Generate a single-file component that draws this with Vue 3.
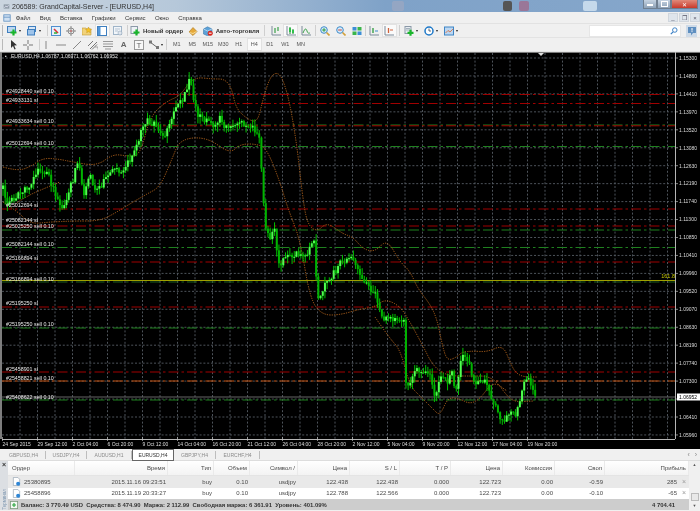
<template>
  <div class="app">
    <!-- заголовок окна -->
    <div class="titlebar">
      <svg class="ic app-ic" viewBox="0 0 10 10"><rect x="1" y="2" width="8" height="6" fill="#8d99a5" /><path d="M2 7 4 4l2 2 2-3" fill="none" stroke="#eef" /></svg>
      <span class="title">206589: GrandCapital-Server - [EURUSD,H4]</span>
      <span v-for="b in blobs" :key="b.cls" class="blob" :class="b.cls"></span>
      <div class="win-btns">
        <span class="wb"><i class="wb-min"></i></span>
        <span class="wb"><i class="wb-max"></i></span>
        <span class="wb wb-close">✕</span>
      </div>
    </div>

    <!-- меню -->
    <div class="menubar">
      <svg class="ic menu-ic" viewBox="0 0 10 10"><rect x="1" y="1" width="8" height="8" fill="#cfe0f2" stroke="#5f8fc0" /><path d="M1 4h8" stroke="#5f8fc0" /></svg>
      <span v-for="m in menu" :key="m" class="menu-item">{{ m }}</span>
      <div class="mdi-btns">
        <span class="mdi">_</span>
        <span class="mdi">❐</span>
        <span class="mdi">×</span>
      </div>
    </div>

    <!-- панель 1 -->
    <div class="toolbar">
      <span class="grip"></span>
      <div class="tb dd">
        <svg class="ic" viewBox="0 0 10 10"><rect x=".5" y=".5" width="8" height="6" fill="#bcd7f2" stroke="#3f7fbf" /><path d="M6.5 3.5v6M3.5 6.5h6" stroke="#19b52b" stroke-width="2.2" /></svg>
        <i class="caret"></i>
      </div>
      <div class="tb dd ml2">
        <svg class="ic" viewBox="0 0 10 10"><rect x="1.5" y=".5" width="7" height="5" fill="#d7e6f6" stroke="#3f7fbf" /><rect x=".5" y="3.5" width="7" height="5.5" fill="#9fc4ea" stroke="#3f7fbf" /></svg>
        <i class="caret"></i>
      </div>
      <span class="sep ml4"></span>
      <div class="tb w155">
        <svg class="ic" viewBox="0 0 10 10"><rect x=".5" y=".5" width="9" height="9" fill="#e6f0fa" stroke="#4f8fcf" /><path d="M3 3l4 4" stroke="#d33" stroke-width="1.6" /><path d="M3 7h3" stroke="#2a2" stroke-width="1.4" /></svg>
      </div>
      <div class="tb w155">
        <svg class="ic" viewBox="0 0 10 10" fill="none" stroke="#8b8b8b"><circle cx="5" cy="5" r="3" /><path d="M5 0v10M0 5h10" /><circle cx="5" cy="5" r=".8" fill="#d55" stroke="none" /></svg>
      </div>
      <div class="tb w155">
        <svg class="ic" viewBox="0 0 10 10"><path d="M0 2h4l1 1h4v6H0z" fill="#f1d27a" stroke="#c59a35" stroke-width=".6" /><path d="M6.5 1l1 2 2 .3-1.5 1.4.4 2-1.900-1-1.900 1 .4-2L3.500 3.300l2-.3z" fill="#f7c325" stroke="#b98a18" stroke-width=".4" /></svg>
      </div>
      <div class="tb w155 active">
        <svg class="ic" viewBox="0 0 10 10"><rect x=".5" y=".5" width="9" height="9" fill="#fff" stroke="#3f7fbf" /><rect x="1" y="1" width="2.500" height="8" fill="#4f95d8" /></svg>
      </div>
      <div class="tb w155">
        <svg class="ic" viewBox="0 0 10 10"><rect x=".5" y=".5" width="8" height="8" fill="#f2f6fa" stroke="#9fb4c8" /><path d="M2 3h5M2 5h3" stroke="#b5c3d2" /><circle cx="7" cy="7" r="2" fill="#dfe6ee" stroke="#93a6ba" stroke-width=".6" /></svg>
      </div>
      <span class="sep ml15"></span>
      <div class="tb-text">
        <svg class="ic" viewBox="0 0 10 10"><rect x="1" y=".5" width="6.500" height="7" fill="#eef2f6" stroke="#8b99a8" /><path d="M6.500 3.500v6M3.500 6.500h6" stroke="#19b52b" stroke-width="2.200" /></svg>
        <b>Новый ордер</b>
      </div>
      <div class="tb w155">
        <svg class="ic" viewBox="0 0 10 10"><path d="M1 6 5 1.500 9 5.500 5 9.500z" fill="#e5a93a" stroke="#a8741a" stroke-width=".6" /><path d="M1.500 6.500 5 7.500l3.500-2" fill="none" stroke="#fff1c0" stroke-width=".7" /></svg>
      </div>
      <div class="tb-text">
        <svg class="ic" viewBox="0 0 10 10"><path d="M.5 3 4.500.8 9 3v5L4.500 9.800.5 8z" fill="#5da2d8" stroke="#2f6ea5" stroke-width=".5" /><path d="M.5 3l4 2 4.500-2" fill="none" stroke="#e2f0fb" stroke-width=".6" /><circle cx="7.200" cy="7.200" r="2.500" fill="#d8261c" /><path d="M5.800 7.200h2.800" stroke="#fff" /></svg>
        <b>Авто-торговля</b>
      </div>
      <span class="sep ml3"></span>
      <div class="tb ml3">
        <svg class="ic" viewBox="0 0 10 10" fill="none"><path d="M1 0v9h9" stroke="#7d8b9a" /><path d="M4 2v5M7 1v4" stroke="#3aa04a" stroke-width="1.200" /></svg>
      </div>
      <div class="tb active">
        <svg class="ic" viewBox="0 0 10 10" fill="none"><path d="M1 0v9h9" stroke="#7d8b9a" /><path d="M4 1v7" stroke="#1d8f31" /><rect x="3" y="2" width="2" height="4" fill="#2fc04a" /><path d="M7 3v5" stroke="#1d8f31" /><rect x="6" y="4" width="2" height="3" fill="#2fc04a" /></svg>
      </div>
      <div class="tb">
        <svg class="ic" viewBox="0 0 10 10" fill="none"><path d="M1 0v9h9" stroke="#7d8b9a" /><path d="M2 7c2-5 3-5 4-2s2 2 3 2" stroke="#3aa04a" /></svg>
      </div>
      <span class="sep ml15"></span>
      <div class="tb w16 ml1">
        <svg class="ic" viewBox="0 0 10 10"><circle cx="4" cy="4" r="3.300" fill="#d7ecfb" stroke="#3f8bc9" /><path d="M6.500 6.500 9.500 9.500" stroke="#d2a03a" stroke-width="1.600" /><path d="M2.200 4h3.600M4 2.200v3.600" stroke="#2a9a3a" /></svg>
      </div>
      <div class="tb w16">
        <svg class="ic" viewBox="0 0 10 10"><circle cx="4" cy="4" r="3.300" fill="#d7ecfb" stroke="#3f8bc9" /><path d="M6.500 6.500 9.500 9.500" stroke="#d2a03a" stroke-width="1.600" /><path d="M2.200 4h3.600" stroke="#c43" /></svg>
      </div>
      <div class="tb w16">
        <svg class="ic" viewBox="0 0 10 10"><rect x=".5" y="1" width="4" height="3.500" fill="#3d8ed6" /><rect x="5.500" y="1" width="4" height="3.500" fill="#3ab54a" /><rect x=".5" y="5.500" width="4" height="3.500" fill="#3ab54a" /><rect x="5.500" y="5.500" width="4" height="3.500" fill="#3d8ed6" /></svg>
      </div>
      <span class="sep"></span>
      <div class="tb ml1">
        <svg class="ic" viewBox="0 0 10 10" fill="none"><path d="M1 0v9h9" stroke="#7d8b9a" /><path d="M4 2v5" stroke="#2a9a3a" stroke-width="1.300" /><path d="M6 5h3" stroke="#3f8bc9" /></svg>
      </div>
      <div class="tb active">
        <svg class="ic" viewBox="0 0 10 10" fill="none"><path d="M1 0v9h9" stroke="#7d8b9a" /><path d="M4.500 2v5" stroke="#d0603a" stroke-width="1.300" /><path d="M6 4h3" stroke="#d0603a" /></svg>
      </div>
      <span class="sep ml2"></span>
      <div class="tb dd ml2">
        <svg class="ic" viewBox="0 0 10 10"><rect x="1" y=".5" width="6" height="7" fill="#e8edf2" stroke="#8b99a8" /><path d="M2 2.500h4M2 4h4" stroke="#a5b1bd" /><path d="M6.500 3.800v6M3.500 6.800h6" stroke="#19b52b" stroke-width="2.200" /></svg>
        <i class="caret"></i>
      </div>
      <div class="tb dd ml2">
        <svg class="ic" viewBox="0 0 10 10" fill="none"><circle cx="5" cy="5" r="4" fill="#fff" stroke="#1e78c8" stroke-width="1.500" /><path d="M5 2.500V5h2" stroke="#345" stroke-width=".8" /></svg>
        <i class="caret"></i>
      </div>
      <div class="tb dd ml2">
        <svg class="ic" viewBox="0 0 10 10"><rect x=".5" y="1" width="9" height="8" fill="#bcd7f2" stroke="#3f85c5" /><path d="M1.500 7 4 4.500l2 1.500 3-3" fill="none" stroke="#d9662e" stroke-width=".8" /></svg>
        <i class="caret"></i>
      </div>
      <div class="search">
        <svg class="ic search-ic" viewBox="0 0 10 10" fill="none"><circle cx="6" cy="3.800" r="2.800" stroke="#3a7fc4" stroke-width="1.200" /><path d="M3.800 6 1 9" stroke="#3a7fc4" stroke-width="1.500" /></svg>
      </div>
      <div class="help">
        <svg class="ic" viewBox="0 0 10 10"><path d="M1 1h8v6H6L4 9.500V7H1z" fill="#5f8fc0" /><path d="M5 2v2.600M5 5.200v.9" stroke="#fff" /></svg>
      </div>
    </div>

    <!-- панель 2 -->
    <div class="toolbar">
      <span class="grip"></span>
      <div class="tb w155">
        <svg class="ic" viewBox="0 0 10 10"><path d="M3 0v8l2-2 1.500 3.500 1.200-.5L6.200 5.600 9 5.300z" fill="#333" /></svg>
      </div>
      <div class="tb w155">
        <svg class="ic" viewBox="0 0 10 10"><path d="M5 0v4M5 6v4M0 5h4M6 5h4" stroke="#777" /></svg>
      </div>
      <span class="sep ml3"></span>
      <div class="tb w125">
        <svg class="ic" viewBox="0 0 10 10"><path d="M5 1v8" stroke="#888" /></svg>
      </div>
      <div class="tb w17">
        <svg class="ic" viewBox="0 0 10 10"><path d="M0 5h10" stroke="#888" /></svg>
      </div>
      <div class="tb w155">
        <svg class="ic" viewBox="0 0 10 10"><path d="M1 9 9 1" stroke="#888" /></svg>
      </div>
      <div class="tb w155">
        <svg class="ic" viewBox="0 0 10 10" fill="none" stroke="#777"><path d="M0 6 5 1M2 9l7-7M4 9.500l5-5" /><path d="M7 7h3v2.500" stroke-width=".6" /></svg>
      </div>
      <div class="tb w155">
        <svg class="ic" viewBox="0 0 10 10" stroke="#999"><path d="M0 1.500h10M0 4h10M0 6.500h10M2 9h6" /></svg>
      </div>
      <div class="tb w155">
        <span class="glyph-a">A</span>
      </div>
      <div class="tb w155">
        <svg class="ic" viewBox="0 0 10 10"><rect x=".5" y=".5" width="9" height="9" fill="#f8f8f8" stroke="#999" /><text x="5" y="8" class="glyph-t" text-anchor="middle">T</text></svg>
      </div>
      <div class="tb dd dd-tool">
        <svg class="ic" viewBox="0 0 10 10" stroke="#666" fill="none"><path d="M1 2 5 5 9 8" /><path d="M0 .5h3v3H0zM7 6h3v3H7z" fill="#777" stroke="none" /></svg>
        <i class="caret"></i>
      </div>
      <span class="sep"></span>
      <div v-for="t in timeframes" :key="t" class="tf" :class="{ active: t === 'H4' }">{{ t }}</div>
    </div>

    <!-- график, координаты по странице -->
    <svg class="chart" viewBox="0 53 700 397" width="700" height="397">
      <rect x="0" y="53" width="700" height="397" fill="#000" />
      <g stroke="#565c64" stroke-width=".9" stroke-dasharray="2 1.800">
        <line v-for="y in gridY" :key="'gy' + y" x1="2" x2="675" :y1="y" :y2="y" />
        <line v-for="x in gridX" :key="'gx' + x" y1="54" y2="440" :x1="x" :x2="x" />
      </g>

      <g fill="none">
        <line v-for="l in orders" :key="'ol' + l.y" x1="2" x2="675" :y1="l.y" :y2="l.y" :stroke="l.color" stroke-dasharray="10 3 2.500 3" />
      </g>
      <line x1="2" x2="675" y1="281.500" y2="281.500" stroke="#a0a000" />
      <line x1="2" x2="675" y1="398" y2="398" stroke="#666" />

      <g fill="none" stroke="#b5651d" stroke-dasharray="1.200 1.200">
        <path v-for="(b, i) in bandPaths" :key="'band' + i" :d="b" />
      </g>

      <g>
        <g v-for="c in candles" :key="c.x">
          <line :x1="c.x" :x2="c.x" :y1="c.high" :y2="c.low" stroke="#00c000" />
          <rect :x="c.x - 1" :y="c.top" width="2" :height="c.h" :fill="c.up ? '#50ff50' : '#00b400'" />
        </g>
      </g>

      <g class="order-text">
        <text v-for="t in orderLabels" :key="t.text + t.y" x="6" :y="t.y">{{ t.text }}</text>
      </g>

      <text x="5" y="59" class="head-text">▪</text>
      <text x="11" y="59" class="head-text">EURUSD,H4  1.06787 1.06971 1.06762 1.06952</text>
      <text x="675" y="279" class="fibo" text-anchor="end">161.8</text>
      <path d="M538 54h6l-3 3z" fill="#ddd" />

      <!-- оси -->
      <rect x="0" y="53" width="2" height="387" fill="#7d7d7d" />
      <rect x="0" y="53" width="700" height=".8" fill="#999" />
      <line x1="675.500" x2="675.500" y1="53" y2="440" stroke="#b5b5b5" />
      <line x1="2" x2="675" y1="440.500" y2="440.500" stroke="#b5b5b5" />
      <g stroke="#bbb" stroke-width=".7">
        <line v-for="y in gridY" :key="'ty' + y" x1="675" x2="678" :y1="y" :y2="y" />
        <line v-for="t in timeLabels" :key="'tx' + t.x" :x1="t.x" :x2="t.x" y1="438" y2="442" />
      </g>
      <g class="axis-text">
        <text v-for="p in axisPrices" :key="p.label" x="679" :y="p.y + 1.800">{{ p.label }}</text>
        <text v-for="t in timeLabels" :key="t.label" :x="t.x" y="447">{{ t.label }}</text>
      </g>
      <rect x="677" y="394.500" width="23" height="7" fill="#fff" />
      <text x="679" y="400" class="cur-price">1.06952</text>
    </svg>

    <!-- вкладки графиков -->
    <div class="tabs">
      <span v-for="t in tabs" :key="t.name" class="tab" :class="[t.cls, { active: t.name === 'EURUSD,H4' }]">{{ t.name }}</span>
      <span class="tab-arrows">‹ ›</span>
    </div>

    <!-- терминал -->
    <div class="terminal">
      <div class="term-side">
        <span class="side-x">×</span>
        <span class="side-title">Терминал</span>
      </div>
      <div class="term-table">
        <div class="row head">
          <span v-for="h in columns" :key="h.key" class="cell" :class="{ left: h.left }">{{ h.title }}</span>
        </div>
        <div v-for="r in rows" :key="r[0]" class="row">
          <span v-for="(v, i) in r" :key="i" class="cell" :class="{ left: i === 0 }">
            <svg v-if="i === 0" class="ic order-ic" viewBox="0 0 10 10"><path d="M1.500.5h5l2 2v7h-7z" fill="#fff" stroke="#8a9aaa" stroke-width=".7" /><circle cx="6.800" cy="7.500" r="2.200" fill="#2e86d6" /></svg>
            {{ v }}
            <span v-if="i === r.length - 1" class="row-close">×</span>
          </span>
        </div>
        <div class="row total">
          <svg class="ic total-ic" viewBox="0 0 10 10"><rect x=".5" y=".5" width="9" height="9" fill="#f4f8f4" stroke="#7d9a7d" /><path d="M5 2.500v5M2.500 5h5" stroke="#2aa53c" stroke-width="1.400" /></svg>
          <b class="balance">Баланс: 3 770.49 USD&nbsp; Средства: 8 474.90&nbsp; Маржа: 2 112.99&nbsp; Свободная маржа: 6 361.91&nbsp; Уровень: 401.09%</b>
          <b class="total-sum">4 704.41</b>
        </div>
      </div>
      <div class="scroll">
        <span class="sc-arrow">▲</span>
        <span class="sc-thumb"></span>
        <span class="sc-arrow">▼</span>
      </div>
    </div>
  </div>
</template>

<script setup>
const blobs = [{ cls: 'b1' }, { cls: 'b2' }, { cls: 'b3' }, { cls: 'b4' }]
const menu = ['Файл', 'Вид', 'Вставка', 'Графики', 'Сервис', 'Окно', 'Справка']
const timeframes = ['M1', 'M5', 'M15', 'M30', 'H1', 'H4', 'D1', 'W1', 'MN']
const tabs = [
  { name: 'GBPUSD,H4', cls: 't44' }, { name: 'USDJPY,H4', cls: 't41' }, { name: 'AUDUSD,H1', cls: 't45' },
  { name: 'EURUSD,H4', cls: 't42' }, { name: 'GBPJPY,H4', cls: 't42' }, { name: 'EURCHF,H4', cls: 't44' }
]

const priceList = ['1.15300', '1.14860', '1.14410', '1.13970', '1.13520', '1.13080', '1.12630', '1.12190', '1.11740', '1.11300', '1.10850', '1.10410', '1.09960', '1.09520', '1.09070', '1.08630', '1.08190', '1.07740', '1.07300', '1.06850', '1.06410', '1.05960']
const prices = priceList.map((label, i) => ({ label, y: 59 + i * 17.95 }))
const gridY = prices.map(p => p.y)
// 1.06850 закрыта меткой текущей цены
const axisPrices = prices.filter(p => p.label !== '1.06850')
const gridX = Array.from({ length: 38 }, (_, i) => 20 + i * 17.5)

const timeList = ['24 Sep 2015', '29 Sep 12:00', '2 Oct 04:00', '6 Oct 20:00', '9 Oct 12:00', '14 Oct 04:00', '16 Oct 20:00', '21 Oct 12:00', '26 Oct 04:00', '28 Oct 20:00', '2 Nov 12:00', '5 Nov 04:00', '9 Nov 20:00', '12 Nov 12:00', '17 Nov 04:00', '19 Nov 20:00']
const timeLabels = timeList.map((label, i) => ({ label, x: 2.5 + i * 35 }))

const RED = '#a00000'
const GREEN = '#1f801f'
const orders = [
  { y: 95.5, color: RED }, { y: 104.5, color: RED }, { y: 126, color: GREEN }, { y: 126.8, color: RED },
  { y: 147.5, color: GREEN }, { y: 210, color: RED }, { y: 227, color: RED }, { y: 231, color: GREEN },
  { y: 248.5, color: GREEN }, { y: 263, color: RED }, { y: 283, color: '#1c5c1c' }, { y: 308, color: RED },
  { y: 329, color: GREEN }, { y: 373, color: RED }, { y: 382, color: '#c4500f' }, { y: 401, color: GREEN }
]
const orderLabels = [
  { y: 94, text: '#24928440 sell 0.10' }, { y: 103, text: '#24933131 sl' },
  { y: 124, text: '#24933634 sell 0.10' }, { y: 146, text: '#25012694 sell 0.10' },
  { y: 208, text: '#25012694 sl' }, { y: 223, text: '#25082144 sl' },
  { y: 229, text: '#25025250 sell 0.10' }, { y: 247, text: '#25082144 sell 0.10' },
  { y: 261, text: '#25166894 sl' }, { y: 282, text: '#25166894 sell 0.10' },
  { y: 306, text: '#25195250 sl' }, { y: 327, text: '#25195250 sell 0.10' },
  { y: 372, text: '#25458901 sl' }, { y: 381, text: '#25458821 sell 0.10' },
  { y: 400, text: '#25408622 sell 0.10' }
]

// точки полос боллинджера сняты со скриншота
const bands = [
  [[3,168],[17,172],[30,168],[43,159],[58,160],[73,163],[97,167],[113,155],[127,157],[140,157],[150,117],[167,102],[180,97],[193,78],[213,80],[225,80],[232,90],[236,110],[250,122],[258,122],[263,100],[270,78],[277,73],[283,80],[290,105],[297,147],[302,193],[307,225],[317,233],[327,223],[343,235],[353,238],[363,250],[375,253],[387,240],[400,263],[410,272],[418,290],[430,305],[437,320],[442,345],[447,362],[457,358],[462,353],[473,352],[487,353],[503,346],[510,363],[515,373],[523,378],[537,378]],
  [[3,203],[17,212],[30,225],[50,223],[73,222],[100,222],[117,213],[133,203],[147,195],[160,188],[172,160],[180,140],[207,138],[230,155],[240,145],[257,145],[267,150],[280,183],[288,210],[300,240],[310,300],[322,316],[340,316],[360,310],[375,308],[385,300],[400,307],[410,323],[423,347],[433,367],[447,377],[473,377],[487,377],[497,383],[507,397],[515,403],[533,402]],
  [[375,318],[390,340],[400,350],[410,387],[420,397],[433,410],[440,417],[448,398],[460,400],[470,405],[480,400],[493,382],[507,392]],
  [[15,205],[27,197],[43,190],[60,183]]
]
const smooth = pts => {
  let d = `M${pts[0][0]} ${pts[0][1]}`
  for (let i = 1; i < pts.length - 1; i++) {
    const mx = (pts[i][0] + pts[i + 1][0]) / 2
    const my = (pts[i][1] + pts[i + 1][1]) / 2
    d += `Q${pts[i][0]} ${pts[i][1]} ${mx} ${my}`
  }
  const last = pts[pts.length - 1]
  return d + `L${last[0]} ${last[1]}`
}
const bandPaths = bands.map(smooth)

// ход цены, свечи строятся по этим точкам
const pricePath = [[3,190],[8,205],[14,200],[22,192],[30,185],[36,172],[44,172],[50,180],[56,200],[62,212],[68,195],[74,178],[78,160],[84,195],[90,172],[96,195],[102,185],[108,178],[114,172],[122,170],[130,160],[136,150],[140,135],[145,122],[152,124],[158,128],[163,135],[168,132],[174,112],[180,105],[186,92],[190,80],[193,95],[197,115],[203,122],[208,118],[214,128],[220,120],[226,128],[232,125],[238,122],[246,128],[254,130],[260,143],[263,200],[265,223],[268,235],[271,238],[274,225],[277,250],[280,268],[285,260],[295,255],[305,260],[310,250],[314,240],[317,290],[319,305],[325,285],[333,275],[340,265],[350,258],[357,270],[365,285],[375,295],[382,320],[395,322],[403,325],[405,322],[406,383],[410,385],[417,368],[425,375],[430,375],[434,400],[441,375],[447,385],[452,372],[456,395],[462,355],[468,360],[472,380],[476,385],[482,380],[487,385],[492,400],[498,415],[505,422],[512,410],[516,420],[520,398],[527,378],[532,385],[536,403]]

const priceAt = x => {
  for (let i = 1; i < pricePath.length; i++) {
    const [x1, y1] = pricePath[i]
    if (x <= x1) {
      const [x0, y0] = pricePath[i - 1]
      return y0 + (y1 - y0) * (x - x0) / (x1 - x0)
    }
  }
  return pricePath[pricePath.length - 1][1]
}

let seed = 41
const rnd = () => {
  seed = (seed * 16807) % 2147483647
  return seed / 2147483647
}

const candles = []
let prev = priceAt(3)
for (let x = 3; x <= 537; x += 2.19) {
  const close = priceAt(x) + (rnd() - 0.5) * 7
  const top = Math.min(prev, close)
  const bottom = Math.max(prev, close)
  candles.push({
    x,
    top,
    h: Math.max(bottom - top, 1),
    up: close < prev,
    high: top - rnd() * 7,
    low: bottom + rnd() * 7
  })
  prev = close
}

const columns = [
  { key: 'order', title: 'Ордер', left: true }, { key: 'time', title: 'Время' }, { key: 'type', title: 'Тип' },
  { key: 'vol', title: 'Объем' }, { key: 'sym', title: 'Символ   /' }, { key: 'price', title: 'Цена' },
  { key: 'sl', title: 'S / L' }, { key: 'tp', title: 'T / P' }, { key: 'price2', title: 'Цена' },
  { key: 'com', title: 'Комиссия' }, { key: 'swap', title: 'Своп' }, { key: 'profit', title: 'Прибыль' }
]
const rows = [
  ['25380895', '2015.11.16 09:23:51', 'buy', '0.10', 'usdjpy', '122.438', '122.438', '0.000', '122.723', '0.00', '-0.59', '285'],
  ['25458896', '2015.11.19 20:33:27', 'buy', '0.10', 'usdjpy', '122.788', '122.566', '0.000', '122.723', '0.00', '-0.10', '-65']
]
</script>

<style>
html, body {
  margin: 0;
  background: #f0f0f0;
  overflow: hidden;
}
</style>

<style scoped>
.app {
  width: 700px;
  height: 511px;
  display: flex;
  flex-direction: column;
  overflow: hidden;
  background: #f0f0f0;
  font-family: "Liberation Sans", Arial, sans-serif;
  font-size: 6px;
  color: #444;
  filter: blur(.3px);
}

.ic {
  width: 10px;
  height: 10px;
  flex-shrink: 0;
  display: block;
}

.titlebar {
  height: 12px;
  flex-shrink: 0;
  position: relative;
  display: flex;
  align-items: center;
  background: linear-gradient(90deg, #cbd5df 0%, #b6c8da 25%, #7fa2c8 55%, #86a7cb 100%);
}

.app-ic {
  width: 7px;
  height: 7px;
  margin: 0 2px 0 3px;
}

.title {
  font-size: 7px;
  color: #333;
}

.blob {
  position: absolute;
  top: 1px;
  height: 10px;
  border-radius: 2px;
}

.b1 { left: 392px; width: 12px; background: rgba(170, 170, 190, .5); }
.b2 { left: 503px; width: 9px; background: #555; }
.b3 { left: 519px; width: 10px; background: rgba(170, 90, 120, .6); }
.b4 { left: 583px; width: 14px; background: rgba(225, 240, 250, .7); }

.win-btns {
  position: absolute;
  right: 2px;
  top: 0;
  display: flex;
  height: 9px;
}

.wb {
  width: 14px;
  display: flex;
  align-items: center;
  justify-content: center;
  background: linear-gradient(180deg, #c5d3e2, #8fa3b8);
  border: 1px solid #6f7f90;
  border-top: 0;
  box-sizing: border-box;
}

.wb-min {
  width: 6px;
  height: 2px;
  margin-top: 2px;
  background: #fff;
}

.wb-max {
  width: 5px;
  height: 4px;
  border: 1px solid #fff;
}

.wb-close {
  width: 27px;
  color: #fff;
  font-size: 6px;
  background: linear-gradient(180deg, #e08a7a, #c9392a);
}

.menubar {
  height: 12px;
  flex-shrink: 0;
  display: flex;
  align-items: center;
  position: relative;
  font-size: 6px;
  color: #333;
  border-bottom: 1px solid #e2e2e2;
  box-sizing: border-box;
}

.menu-ic {
  width: 8px;
  height: 8px;
  margin: 0 0 0 3px;
}

.menu-item {
  margin: 0 4.7px;
}

.mdi-btns {
  position: absolute;
  right: 0;
  top: 1px;
  display: flex;
  gap: 1px;
}

.mdi {
  width: 10px;
  height: 9px;
  line-height: 8px;
  text-align: center;
  font-size: 6px;
  color: #556;
  background: #dfe5ec;
  border: 1px solid #d0d6dd;
  box-sizing: border-box;
}

.toolbar {
  height: 14px;
  flex-shrink: 0;
  display: flex;
  align-items: center;
  box-sizing: border-box;
  border-bottom: 1px solid #e3e3e3;
  padding-left: 2px;
}

.grip {
  width: 1px;
  height: 11px;
  margin-right: 1px;
  border-left: 1px solid #b9b9b9;
}

.sep {
  width: 1px;
  height: 11px;
  flex-shrink: 0;
  background: #cfcfcf;
}

.tb {
  width: 15px;
  height: 13px;
  flex-shrink: 0;
  display: flex;
  align-items: center;
  justify-content: center;
  box-sizing: border-box;
}

.w125 { width: 12.5px; }
.w155 { width: 15.5px; }
.w16 { width: 16px; }
.w17 { width: 17px; }
.ml1 { margin-left: 1px; }
.ml15 { margin-left: 1.5px; }
.ml2 { margin-left: 2px; }
.ml3 { margin-left: 3px; }
.ml4 { margin-left: 4px; }

.dd {
  width: 18px;
  justify-content: flex-start;
  padding-left: 2px;
  gap: 2px;
}

.dd-tool {
  width: 19px;
  padding-left: 2px;
}

.caret {
  width: 0;
  height: 0;
  border-left: 1.5px solid transparent;
  border-right: 1.5px solid transparent;
  border-top: 2px solid #222;
}

.active {
  background: #fafafa;
  border: 1px solid #e2e2e2;
}

.tb-text {
  height: 13px;
  display: flex;
  align-items: center;
  gap: 3px;
  padding: 0 2px;
  flex-shrink: 0;
  font-size: 6px;
  color: #333;
}

.tb-text b {
  font-weight: bold;
  white-space: nowrap;
}

.search {
  margin-left: auto;
  width: 92px;
  height: 12px;
  box-sizing: border-box;
  background: #fff;
  border: 1px solid #e6e6e6;
  display: flex;
  align-items: center;
  justify-content: flex-end;
  padding-right: 2px;
}

.search-ic {
  width: 8px;
  height: 8px;
}

.help {
  width: 11px;
  height: 12px;
  margin: 0 3px 0 5px;
  background: #cfdbe8;
  display: flex;
  align-items: center;
  justify-content: center;
}

.glyph-a {
  font-size: 8px;
  font-weight: bold;
  color: #666;
}

.glyph-t {
  font-size: 8px;
  font-family: "Liberation Sans", Arial, sans-serif;
  fill: #666;
}

.tf {
  width: 15.5px;
  height: 13px;
  flex-shrink: 0;
  line-height: 13px;
  text-align: center;
  font-size: 5.5px;
  color: #555;
  box-sizing: border-box;
}

.sep + .tf {
  margin-left: 2px;
}

.tf.active {
  line-height: 11px;
}

.chart {
  display: block;
  flex-shrink: 0;
}

.order-text text {
  font-size: 5.3px;
  fill: #e8e8e8;
}

.head-text {
  font-size: 5px;
  fill: #e4e4e4;
  white-space: pre;
}

.fibo {
  font-size: 5.5px;
  fill: #c8c800;
}

.axis-text text {
  font-size: 5px;
  fill: #dcdcdc;
}

.cur-price {
  font-size: 5px;
  fill: #000;
}

.tabs {
  height: 12px;
  flex-shrink: 0;
  display: flex;
  align-items: center;
  position: relative;
  padding-left: 2px;
  background: #f0f0f0;
  border-bottom: 1px solid #ddd;
  box-sizing: border-box;
}

.tab {
  text-align: center;
  font-size: 5px;
  color: #8a8a8a;
  border-right: 1px solid #bdbdbd;
  line-height: 8px;
  white-space: nowrap;
  box-sizing: border-box;
}

.t41 { width: 41px; }
.t42 { width: 42px; }
.t44 { width: 44px; }
.t45 { width: 45px; }

.tab.active {
  height: 12px;
  line-height: 10px;
  color: #333;
  background: #fff;
  border: 1px solid #666;
}

.tab-arrows {
  position: absolute;
  right: 3px;
  top: 2px;
  font-size: 7px;
  color: #888;
  word-spacing: 3px;
}

.terminal {
  height: 49px;
  flex-shrink: 0;
  display: flex;
}

.term-side {
  width: 8px;
  flex-shrink: 0;
  display: flex;
  flex-direction: column;
  align-items: center;
  justify-content: space-between;
  background: #dcdfe3;
}

.side-x {
  font-size: 7px;
  line-height: 7px;
  font-weight: bold;
  color: #333;
}

.side-title {
  writing-mode: vertical-rl;
  transform: rotate(180deg);
  font-size: 4.5px;
  color: #7f97b0;
}

.term-table {
  width: 681px;
  flex-shrink: 0;
  display: flex;
  flex-direction: column;
}

.row {
  display: grid;
  grid-template-columns: 67px 93px 46px 36px 48px 52px 50px 51px 52px 52px 50px 84px;
  height: 11.5px;
  align-items: center;
  background: #fff;
  color: #4a4a4a;
}

.row:nth-child(2) {
  background: #e9e9e9;
}

.row.head {
  height: 15px;
  background: linear-gradient(180deg, #fff, #f3f3f3);
  color: #4a4a4a;
  border-bottom: 1px solid #e4e4e4;
  box-sizing: border-box;
}

.cell {
  text-align: right;
  padding-right: 2px;
  white-space: nowrap;
  position: relative;
}

.head .cell {
  border-right: 1px solid #eaeaea;
  line-height: 14px;
}

.cell.left {
  text-align: left;
  padding-left: 4px;
  display: flex;
  align-items: center;
  gap: 3px;
}

.order-ic {
  width: 9px;
  height: 9px;
}

.row .cell:last-child {
  padding-right: 12px;
}

.head .cell:last-child {
  padding-right: 2px;
}

.row-close {
  position: absolute;
  right: 3px;
  top: -1px;
  font-size: 7px;
  color: #999;
}

.row.total {
  flex: 1;
  display: flex;
  gap: 3px;
  background: #cdcdcd;
  color: #333;
  padding-left: 2px;
  position: relative;
  font-size: 5.9px;
}

.total-ic {
  width: 8px;
  height: 8px;
}

.balance {
  white-space: nowrap;
}

.total-sum {
  position: absolute;
  right: 14px;
}

.scroll {
  flex: 1;
  display: flex;
  flex-direction: column;
  align-items: center;
  justify-content: space-between;
  background: #f0f0f0;
}

.sc-arrow {
  font-size: 4px;
  line-height: 8px;
  color: #555;
}

.sc-thumb {
  width: 8px;
  height: 8px;
  margin-top: auto;
  margin-bottom: 1px;
  background: #e8e8e8;
  border: 1px solid #bbb;
  box-sizing: border-box;
}
</style>
